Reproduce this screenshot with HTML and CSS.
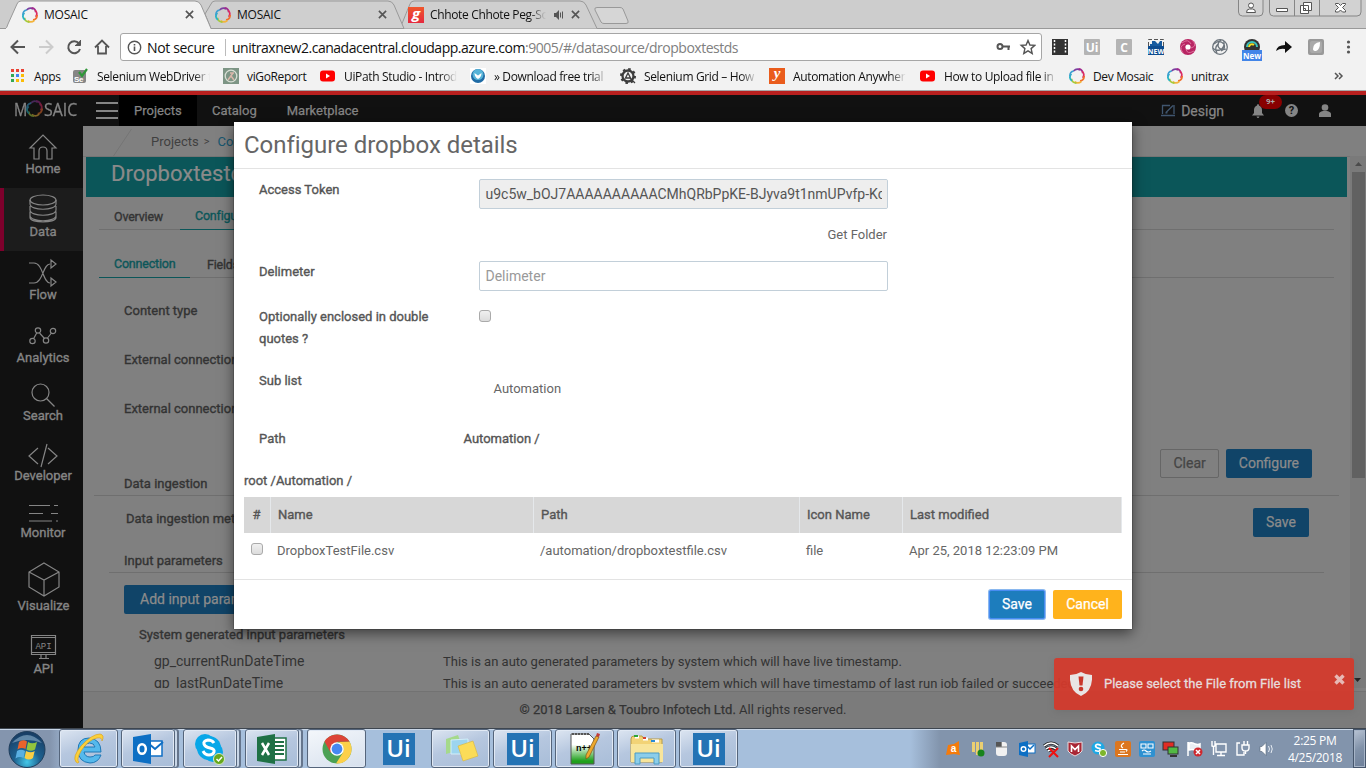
FILE: index.html
```html
<!DOCTYPE html>
<html lang="en">
<head>
<meta charset="utf-8">
<title>MOSAIC</title>
<link rel="stylesheet" href="styles.css">
</head>
<body>
<svg class="sprite" width="0" height="0">
  <symbol id="ring" viewBox="0 0 16 16"><g fill="none" stroke-width="1.7">
    <path stroke="#7a3fa0" d="M4.500 3Q8-.5 11 2.200"/><path stroke="#a0288d" d="M9.500.8Q13.800 1.500 13.600 5.200"/><path stroke="#dc2b62" d="M13.200 3.200Q16.300 6.800 13.600 9.800"/><path stroke="#f0702c" d="M15.200 8Q15 12.500 11 12.800"/><path stroke="#f3b43b" d="M12.500 13.300Q8.800 16.500 5.600 13.600"/><path stroke="#a6c93a" d="M7.500 15.200Q2.800 14.800 2.600 10.800"/><path stroke="#27b4c4" d="M2.800 12.800Q-.8 9.500 2.400 6"/><path stroke="#3c9fd1" d="M.9 8.200Q.8 3.600 4.800 3"/></g></symbol>
  <symbol id="yt" viewBox="0 0 16 16"><rect x="0" y="2.5" width="15" height="11" rx="3" fill="#f00"/><path d="M6 5.500v5l4-2.500z" fill="#fff"/></symbol>
  <symbol id="x" viewBox="0 0 10 10"><path d="M1 1l8 8M9 1l-8 8" stroke="#555" stroke-width="1.800" fill="none"/></symbol>
</svg>

<div class="browser">
  <div class="tabstrip">
    <svg class="tab-shapes" width="660" height="29"><path d="M0 28.500H1366" stroke="#999"/><path d="M398 28.500C401 28 402 23 410 4Q411 1 414 1H580Q584 1 586 5L597 28.500" fill="#cfcfcf" stroke="#999"/><path d="M205 14L211 4Q212 1 215 1H388Q392 1 394 5L404 28.500H211Z" fill="#cfcfcf" stroke="#999"/><path d="M-1 29H5Q7 28 8 24L17 4Q18 1 21 1H195Q199 1 201 5L211 28.500V30H-1Z" fill="#f2f2f2" stroke="#999"/><path d="M597 7.500H620Q622 7.500 623 9L628 21Q629 23.500 626 23.500H604Q602 23.500 601 22L595 10Q594 7.500 597 7.500Z" fill="#d6d6d6" stroke="#999"/></svg>
    <div class="tab"><svg class="i16"><use href="#ring"/></svg><span class="tab-name">MOSAIC</span><svg class="close"><use href="#x"/></svg></div>
    <div class="tab"><svg class="i16"><use href="#ring"/></svg><span class="tab-name">MOSAIC</span><svg class="close"><use href="#x"/></svg></div>
    <div class="tab"><span class="gaana">g</span><span class="tab-name fade">Chhote Chhote Peg-So</span><svg class="speaker" viewBox="0 0 10 10"><path d="M0 3h2l3-3v10L2 7H0z" fill="#555"/><path d="M6.500 2.500v5M8.500 1.500v7" stroke="#555"/></svg><svg class="close"><use href="#x"/></svg></div>
    <svg class="winctl" width="128" height="18"><g fill="#d2d2d2" stroke="#858585"><path d="M.5-2V12q0 4 4 4H21q4 0 4-4V-2M31.500-2V12q0 4 4 4H119q4 0 4-4V-2M56.500 0V16M81.500 0V16"/></g><g fill="#fff" stroke="#555"><circle cx="13" cy="5.500" r="2.500"/><path d="M8.500 12.500q0-3.500 3-3.500h3q3 0 3 3.500zM38.500 8.500h11v3h-11zM65.500 2.500h8v8h-8zM62.500 5.500h8v8h-8zM65.500 8.500h2v2h-2z"/><path d="M97.500 3.500h3l2 2 2-2h3v1l-3 3 3 3v1.500h-3l-2-2-2 2h-3v-1.500l3-3-3-3z"/></g></svg>
  </div>
  <div class="toolbar">
    <svg class="nav" width="112" height="34" viewBox="0 0 112 34"><g fill="none" stroke="#555" stroke-width="2"><path d="M25 18H12M18 11.500L11.500 18L18 24.500"/><path stroke="#ccc" d="M39 18h13M46 11.500l6.500 6.500-6.500 6.500"/><path d="M79 14.500A6 6 0 1 0 80 20"/><path d="M80.500 11v5.500H75" fill="#555" stroke-width="1"/><path d="M95 18.500l7-7 7 7M98 17v7.500h8V17" stroke-width="1.800"/></g></svg>
    <div class="omnibox">
      <svg width="15" height="15" viewBox="0 0 15 15"><circle cx="7.500" cy="7.500" r="6.200" fill="none" stroke="#555" stroke-width="1.400"/><path d="M7.500 6.500V11M7.500 4v1.500" stroke="#555" stroke-width="1.600"/></svg>
      <span class="secure">Not secure</span><span class="url">unitraxnew2.canadacentral.cloudapp.azure.com<i>:9005/#/datasource/dropboxtestds</i></span>
      <svg class="omni-icons" width="40" height="16" viewBox="0 0 40 16"><g fill="none" stroke="#555"><circle cx="4" cy="7.500" r="2.500" stroke-width="2"/><path d="M6.500 7.500h7.500M12.500 7v4" stroke-width="2"/><path d="M32 1.500l1.900 4.500 4.900.4-3.700 3.200 1.100 4.800-4.200-2.600-4.200 2.600 1.100-4.800-3.700-3.200 4.900-.4z" stroke-width="1.400"/></g></svg>
    </div>
    <svg class="ext" width="324" height="34" viewBox="0 0 324 34">
      <rect x="10" y="10" width="16" height="16" fill="#333"/><path d="M12.500 11v14M23.500 11v14" stroke="#fff" stroke-width="1.500" stroke-dasharray="2 1.500"/>
      <rect x="42" y="10" width="16" height="16" rx="1" fill="#b4b4b4"/><text x="50" y="22.500" class="et">Ui</text>
      <rect x="74" y="10" width="16" height="16" rx="1" fill="#b4b4b4"/><text x="82" y="22.500" class="et">C</text>
      <path d="M106.500 17v-6.500h15V17" fill="none" stroke="#555" stroke-dasharray="4 2"/><path d="M108 18v-3h2v-3h3l3 3 2-3h2v6z" fill="#155a9f"/><rect x="106" y="17" width="16" height="9" fill="#0d4b8f"/><text x="114" y="24.500" class="nw">NEW</text>
      <circle cx="146" cy="18" r="8" fill="#b82563"/><path d="M140 14q6-5 9 1M150 11q6 6-1 8M152 22q-7 4-8-2M141 24q-5-7 2-9" fill="none" stroke="#dd6f9b"/><circle cx="146" cy="18" r="2.600" fill="#fff"/>
      <g fill="none" stroke="#6b747c" stroke-width="1.300"><circle cx="178" cy="18" r="7.300"/><path d="M172 15q5-5 10 0 2 5-3 7M182 12q1 7-4 9-5 1-7-2M184 20q-6 2-8-3 0-4 3-6M175 24q-3-5 1-9"/></g>
      <circle cx="210" cy="18" r="8" fill="#333"/><path d="M205 18a5 5 0 0 1 10 0" fill="none" stroke="#3ac5bf" stroke-width="2"/><path d="M207 18a3 3 0 0 1 5-2" fill="none" stroke="#f4df22" stroke-width="2"/><rect x="200" y="21" width="20" height="11" fill="#4285e8"/><text x="210" y="29.500" class="nn">New</text>
      <path d="M234 22q1-6 9-6v-4l7 6-7 6v-4q-5-1-9 2z" fill="#111"/>
      <rect x="266" y="10" width="16" height="16" rx="2" fill="#999"/><rect x="268" y="12" width="12" height="12" rx="2" fill="#aaa"/><path d="M271 20q0-6 7-7 0 8-4 9-3 0-3-2z" fill="#fff"/>
      <g fill="#555"><circle cx="306.500" cy="13" r="1.600"/><circle cx="306.500" cy="18" r="1.600"/><circle cx="306.500" cy="23" r="1.600"/></g>
    </svg>
  </div>
  <div class="bookmarks">
    <div class="bm apps"><svg width="14" height="14" viewBox="0 0 14 14"><path fill="#ea4335" d="M0 0h3v3H0zM5 0h3v3H5zM10 0h3v3h-3z"/><path fill="#34a853" d="M0 5h3v3H0zM0 10h3v3H0z"/><path fill="#4285f4" d="M5 5h3v3H5z"/><path fill="#fbbc05" d="M10 5h3v3h-3zM5 10h3v3H5zM10 10h3v3h-3z"/></svg><span>Apps</span></div>
    <div class="bm"><svg class="i16" viewBox="0 0 16 16"><rect y="2" width="13" height="13" rx="2" fill="#858585"/><text x="1" y="14" class="se">Se</text><path d="M6 4l3 4 5-7" stroke="#2f9638" stroke-width="2.200" fill="none"/></svg><span class="fade">Selenium WebDriver t</span></div>
    <div class="bm"><svg class="i16" viewBox="0 0 16 16"><rect width="16" height="16" fill="#7d9585"/><circle cx="8" cy="8" r="5.800" fill="none" stroke="#d9dfd5" stroke-width="1.300"/><path d="M5 12l5-7M7 5h4M8 8l3 4" stroke="#d9b7aa" stroke-width="1.500"/></svg><span>viGoReport</span></div>
    <div class="bm"><svg class="i16"><use href="#yt"/></svg><span class="fade">UiPath Studio - Introd</span></div>
    <div class="bm"><svg class="i16" viewBox="0 0 16 16"><rect width="16" height="16" fill="#fff"/><circle cx="8" cy="8" r="7" fill="#1f6ba5"/><circle cx="8" cy="6.500" r="5.500" fill="#56b4d8"/><path d="M4.500 5l3.500 2.500L11.500 5q0 4-3.500 6Q4.500 9 4.500 5z" fill="#fff"/></svg><span class="fade">» Download free trial</span></div>
    <div class="bm"><svg class="i16" viewBox="0 0 16 16"><circle cx="8" cy="8" r="5.500" fill="none" stroke="#3d3d3d" stroke-width="2.300"/><circle cx="8" cy="8" r="7" fill="none" stroke="#3d3d3d" stroke-width="2" stroke-dasharray="2.500 3"/><path d="M5.500 10L8 5l2.500 5zM10 10l5 5" fill="none" stroke="#3d3d3d" stroke-width="1.300"/></svg><span class="fade">Selenium Grid – How t</span></div>
    <div class="bm"><span class="yicon">y</span><span class="fade">Automation Anywhere</span></div>
    <div class="bm"><svg class="i16"><use href="#yt"/></svg><span class="fade">How to Upload file in S</span></div>
    <div class="bm"><svg class="i16"><use href="#ring"/></svg><span>Dev Mosaic</span></div>
    <div class="bm"><svg class="i16"><use href="#ring"/></svg><span>unitrax</span></div>
    <svg class="more" width="10" height="8" viewBox="0 0 10 8"><path d="M1 1l3 3-3 3M5 1l3 3-3 3" fill="none" stroke="#555" stroke-width="1.500"/></svg>
  </div>
</div>

<div class="redline"></div>
<header class="apphead">
  <div class="brand"><span>M</span><svg width="17" height="17"><use href="#ring"/></svg><span>SAIC</span></div>
  <div class="burger"><i></i><i></i><i></i></div>
  <nav class="topnav"><a class="on">Projects</a><a>Catalog</a><a>Marketplace</a></nav>
  <div class="design"><svg width="15" height="13" viewBox="0 0 15 13"><path d="M1.500 10V1.500H9M13 1v9M0 11.500h14M5 8.500L12 1.500M4.500 9l2-.5" fill="none" stroke="#40566f" stroke-width="1.300"/></svg><span>Design</span></div>
  <div class="bell"><svg width="12" height="14" viewBox="0 0 12 14"><path d="M6 0q1 0 1 1.500Q10 2.500 10 6v3l2 2.500H0L2 9V6q0-3.500 3-4.500Q5 0 6 0zM4.500 12.500h3Q7 14 6 14t-1.500-1.500z" fill="#858585"/></svg><span class="badge">9+</span></div>
  <div class="help">?</div>
  <svg class="user" width="12" height="13" viewBox="0 0 12 13"><circle cx="6" cy="3.500" r="3.300" fill="#858585"/><path d="M0 13v-3q0-2 4-3h4q4 1 4 3v3z" fill="#858585"/></svg>
</header>

<div class="appbody">
  <aside class="side">
    <a class="s-home"><svg width="30" height="28" viewBox="0 0 30 28"><path d="M2 15L15 2l13 13h-4v11h-5v-8q0-4-4-4t-4 4v8H6V15z"/></svg><span>Home</span></a>
    <a class="s-data"><svg width="28" height="29" viewBox="0 0 28 29"><ellipse cx="14" cy="6" rx="13" ry="5"/><path d="M1 6v4c0 7 26 7 26 0V6M1 12v4c0 7 26 7 26 0v-4M1 17.500v4c0 7 26 7 26 0v-4M1 21.500v2c0 6 26 6 26 0v-2"/></svg><span>Data</span></a>
    <a><svg width="28" height="28" viewBox="0 0 28 28"><path d="M0 4h5C14 4 14 24 21 24M0 24h5C14 24 14 5 21 5M22 1v8l5-4zM22 19v8l5-4z"/></svg><span>Flow</span></a>
    <a class="s-an"><svg width="28" height="18" viewBox="0 0 28 18"><circle cx="3.500" cy="14" r="2.700"/><circle cx="9" cy="3.500" r="2.700"/><circle cx="17" cy="13.500" r="2.700"/><circle cx="24" cy="4" r="2.700"/><path d="M4.700 11.500l3-5.500M10.500 6l5 5.500M18.500 11l4-5"/></svg><span>Analytics</span></a>
    <a class="s-se"><svg width="24" height="24" viewBox="0 0 24 24"><circle cx="9.500" cy="9.500" r="8.500"/><path d="M15.500 15.500l8 8"/></svg><span>Search</span></a>
    <a class="s-dev"><svg width="30" height="25" viewBox="0 0 30 25"><path d="M10 5L1 13l9 8M20 5l9 8-9 8M19 1l-6 23"/></svg><span>Developer</span></a>
    <a class="s-mon"><svg width="30" height="19" viewBox="0 0 30 19"><path d="M1 1.500h21M26 1.500h4M1 9.500h14M23 9.500h7M1 17h23M28 17h2"/></svg><span>Monitor</span></a>
    <a class="s-vis"><svg width="32" height="35" viewBox="0 0 32 35"><path d="M16 1l15 9v15l-15 9L1 25V10zM1 10l15 8 15-8M16 18v16"/></svg><span>Visualize</span></a>
    <a class="s-api"><svg width="26" height="24" viewBox="0 0 26 24"><path d="M.5.500h24v19H.5zM1 2.500h23M1 17.500h23M10 20v3M15 20v3M8 23.500h10"/><text x="12.500" y="14">API</text></svg><span>API</span></a>
  </aside>

  <div class="main">
    <div class="crumbs"><svg width="40" height="30"><path d="M31.500 3L13.500 30" stroke="#757575" fill="none"/></svg><span>Projects</span><b>&gt;</b><em>Configuration</em></div>
    <div class="scrollarea">
      <div class="pane">
        <h1 class="band">Dropboxtestds</h1>
        <div class="tabs t1"><a class="ov">Overview</a><a class="sel">Configuration</a></div>
        <div class="tabs t2"><a class="sel">Connection</a><a class="fl">Fields</a></div>
        <div class="field">Content type</div>
        <div class="field">External connection type</div>
        <div class="field">External connection</div>
        <div class="btnrow"><button class="btn ghost">Clear</button><button class="btn blue">Configure</button></div>
        <div class="ingest">Data ingestion</div>
        <div class="method"><span>Data ingestion method</span><button class="btn blue save">Save</button></div>
        <div class="inputs">Input parameters</div>
        <button class="btn blue add">Add input parameter</button>
        <div class="sys">System generated input parameters</div>
        <div class="prow"><span>gp_currentRunDateTime</span><span>This is an auto generated parameters by system which will have live timestamp.</span></div>
        <div class="prow"><span>gp_lastRunDateTime</span><span>This is an auto generated parameters by system which will have timestamp of last run job failed or succeeded.</span></div>
      </div>
      <div class="scroll"><svg width="16" height="16"><path d="M5 10h7L8.500 6z" fill="#4b4b4b"/></svg><i></i><svg class="down" width="16" height="16"><path d="M2 6h7L5.500 10z" fill="#222"/></svg></div>
    </div>
    <footer class="foot"><b>© 2018 Larsen &amp; Toubro Infotech Ltd.</b> All rights reserved.</footer>
  </div>
</div>

<section class="modal">
  <h2>Configure dropbox details</h2>
  <div class="mbody">
    <div class="mrow r1"><label>Access Token</label><div class="inp dis">u9c5w_bOJ7AAAAAAAAAACMhQRbPpKE-BJyva9t1nmUPvfp-Kc</div></div>
    <div class="getf">Get Folder</div>
    <div class="mrow r2"><label>Delimeter</label><div class="inp ph">Delimeter</div></div>
    <div class="mrow r3"><label>Optionally enclosed in double quotes ?</label><i class="cb"></i></div>
    <div class="mrow r4"><label>Sub list</label><span>Automation</span></div>
    <div class="mrow r5"><label>Path</label><b>Automation /</b></div>
    <div class="root">root /Automation /</div>
    <div class="grid gh"><span>#</span><span>Name</span><span>Path</span><span>Icon Name</span><span>Last modified</span></div>
    <div class="grid gr"><span><i class="cb"></i></span><span>DropboxTestFile.csv</span><span>/automation/dropboxtestfile.csv</span><span>file</span><span>Apr 25, 2018 12:23:09 PM</span></div>
  </div>
  <div class="mfoot"><button class="btn msave">Save</button><button class="btn mcancel">Cancel</button></div>
</section>

<div class="toast"><svg width="22" height="24" viewBox="0 0 22 24"><path d="M11 0q5 3 11 3 1 16-11 21Q-1 19 0 3q6 0 11-3z" fill="#e9e5e5"/><path d="M8.500 4.500h5l-1 9h-3z" fill="#c9362b"/><circle cx="11" cy="17" r="2.300" fill="#c9362b"/></svg><span>Please select the File from File list</span><svg class="tx" width="11" height="11" viewBox="0 0 11 11"><path d="M1.500 1.500l8 8M9.500 1.500l-8 8" stroke="#e7b9b5" stroke-width="3.400"/></svg></div>

<div class="taskbar">
  <svg class="orb" width="60" height="40" viewBox="0 0 60 40"><defs><radialGradient id="og" cx=".5" cy=".85" r=".8"><stop offset="0" stop-color="#43c7e8"/><stop offset=".45" stop-color="#1d618f"/><stop offset="1" stop-color="#183e66"/></radialGradient></defs><circle cx="27" cy="20.500" r="18" fill="url(#og)" stroke="#203e5c"/><path d="M12 14Q27-2 42 14 27 8 12 14" fill="#8fb2cd" opacity=".6"/><path d="M19 13q4-3 8-.5L25.500 20q-4-2-8 .5z" fill="#e8632c"/><path d="M28 13q4 2.500 9 0L35 20.500q-4 2.500-8.500 0z" fill="#92c43e"/><path d="M17 22q4-2.500 8 0L23.500 29q-4-2-8 .5z" fill="#5ab0e2"/><path d="M26 22q5 2.500 8.700 0L33 29q-4 3-8.500 0z" fill="#f9ce44"/></svg>
  <div class="tb"><svg width="34" height="34" viewBox="0 0 34 34"><path d="M29 20H12q1 5 6 5 4 0 5-2h6q-3 8-11 8-12-1-12-13Q6 6 17 6q12 1 12 14zM12 15h11q-1-4-5.500-4T12 15z" fill="#55b9ec" stroke="#1e78b6" fill-rule="evenodd"/><path d="M4 30Q0 25 9 14 20 2 28 2q5 1 2 7 0-4-5-3Q16 8 9 19 4 28 7 30q-1 2-3 0z" fill="#fbd03b" stroke="#d99c13" stroke-width=".6"/></svg></div>
  <div class="tb stack"><svg width="32" height="32" viewBox="0 0 32 32"><rect x="14" y="8" width="16" height="15" fill="#fff" stroke="#0f6fc5" stroke-width="1.500"/><path d="M16 10l7 6 8-7" fill="none" stroke="#0f6fc5" stroke-width="2"/><path d="M1 4l18-3v30L1 28z" fill="#0d6fc4"/><ellipse cx="10" cy="16" rx="3.800" ry="4.800" fill="none" stroke="#fff" stroke-width="2.500"/></svg></div>
  <div class="tb stack s2"><svg width="32" height="32" viewBox="0 0 32 32"><circle cx="11" cy="11" r="10" fill="#08a7e8"/><circle cx="19" cy="19" r="10" fill="#08a7e8"/><circle cx="15" cy="15" r="12" fill="#08a7e8"/><path d="M20 10q-2-3-6-3-5 1-4 4 1 3 6 4 5 1 4 4-1 3-5 3t-6-4" fill="none" stroke="#fff" stroke-width="3"/><circle cx="25" cy="26" r="5.500" fill="#66a81c" stroke="#d9e8c8"/><path d="M22.500 26l2 2 3.500-4" fill="none" stroke="#fff" stroke-width="1.500"/></svg></div>
  <div class="tb stack"><svg width="32" height="32" viewBox="0 0 32 32"><rect x="16" y="5" width="14" height="22" fill="#fff" stroke="#1f7145" stroke-width="1.500"/><path d="M19 9h9M19 13h9M19 17h9M19 21h9" stroke="#1f7145" stroke-width="2"/><path d="M1 4l18-3v30L1 28z" fill="#1f7145"/><path d="M6 10l7 12M13 10L6 22" stroke="#fff" stroke-width="2.500"/></svg></div>
  <div class="tb lit"><svg width="30" height="30" viewBox="0 0 30 30"><circle cx="15" cy="15" r="14.500" fill="#4ba154"/><path d="M2.500 7.600A14.500 14.500 0 0 1 27.600 7.800H15l-6.300 11z" fill="#dc4437"/><path d="M27.600 7.800A14.500 14.500 0 0 1 14 29.500l7-11Q22.500 12 17 8z" fill="#fdd04a"/><circle cx="15" cy="15" r="6.800" fill="#fff"/><circle cx="15" cy="15" r="5.400" fill="#4688f1"/></svg></div>
  <div class="tb bare"><span class="ui">Ui</span></div>
  <div class="tb"><svg width="36" height="34" viewBox="0 0 36 34"><path d="M3 7l12-4 5 14-17 5z" fill="#a5d98b"/><path d="M8 8l17-1v15H8z" fill="#9cd5ef" stroke="#d4eef8"/><path d="M15 14l15-5 5 15-15 5z" fill="#fbdc58" stroke="#d7b63c" stroke-width=".6"/></svg></div>
  <div class="tb"><span class="ui">Ui</span></div>
  <div class="tb"><svg width="32" height="34" viewBox="0 0 32 34"><defs><linearGradient id="ng" x2="0" y2="1"><stop offset=".35" stop-color="#fff"/><stop offset=".9" stop-color="#1fa01c"/></linearGradient></defs><path d="M2 2h18l5 5v25H2z" fill="url(#ng)" stroke="#555"/><path d="M3 2h17" stroke="#555" stroke-dasharray="2 1" stroke-width="2"/><text x="7" y="19" class="np">n++</text><path d="M27 4l3 1-10 20-3 2 0-4z" fill="#eda92e" stroke="#805416" stroke-width=".7"/><path d="M27 4l1-3 3 1-1 3z" fill="#c43c3c"/></svg></div>
  <div class="tb"><svg width="34" height="34" viewBox="0 0 34 34"><path d="M1 7q0-3 3-3h8l2 3h18v23H1z" fill="#f2d376" stroke="#b99b45"/><path d="M5 5h4M13 7h5M22 9h7" stroke="#fff" stroke-width="3"/><path d="M4 4h4" stroke="#2ba63a" stroke-width="2"/><path d="M13 6h3" stroke="#d44431" stroke-width="2"/><path d="M21 9h4" stroke="#288bd5" stroke-width="2"/><path d="M1 12h32v18H1z" fill="#f8e59b"/><path d="M5 32V21h24v11h-5v-6H10v6z" fill="#8bcdea" stroke="#4a9bc5"/></svg></div>
  <div class="tb"><span class="ui">Ui</span></div>
  <div class="tray">
    <svg width="336" height="24" viewBox="0 0 336 24">
      <g transform="translate(4 4)"><path d="M2 4l6-1 5-3v10l1 4-6-1-8 1z" fill="#f57b0b"/><text x="7.500" y="11" class="ta">a</text></g>
      <g transform="translate(29 4)"><path d="M1 1h3v10l4 4 4-4V1H9v11H8V1H5v11H4z" fill="#d1b355"/><path d="M1 1h3v10H1zM5 1h3v13H5zM9 1h3v10H9z" fill="#ebcf72"/><circle cx="10" cy="12" r="3.500" fill="#18841c"/></g>
      <g transform="translate(53 4)"><rect x="1" y="1" width="11" height="14" rx="3" fill="#f1f1f1"/><path d="M1 1h6v5H1z" fill="#555"/><path d="M1 6h11M6.500 1v5" stroke="#888"/></g>
      <g transform="translate(77 4)"><rect x="7" y="3" width="9" height="9" fill="#fff" stroke="#0d6fc4"/><path d="M8 5l3 3 4-4" stroke="#0d6fc4" fill="none" stroke-width="1.500"/><path d="M0 2l9-2v16L0 14z" fill="#0d6fc4"/><circle cx="4.500" cy="8" r="2.300" fill="none" stroke="#fff" stroke-width="1.400"/></g>
      <g transform="translate(101 4)" fill="none"><path d="M1 5q7-6 14 0M3 8q5-4 10 0M5 10q3-2 5 0" stroke="#222" stroke-width="3"/><path d="M1 5q7-6 14 0M3 8q5-4 10 0M5 10q3-2 5 0" stroke="#fff" stroke-width="1.600"/><path d="M6 7l9 9M15 7l-9 9" stroke="#e11" stroke-width="2"/></g>
      <g transform="translate(125 4)"><path d="M1 1l7 1 7-1v9q-2 3-7 5-5-2-7-5z" fill="#a92735" stroke="#e8d9dc"/><path d="M4.500 11V5L8 8.500 11.500 5v6" fill="none" stroke="#fff" stroke-width="1.600"/></g>
      <g transform="translate(149 4)"><circle cx="7" cy="7" r="6.500" fill="#1da9e5"/><path d="M10 4.500Q5 2 4.500 5 5 7 9 7.500q1 4-5 2" fill="none" stroke="#fff" stroke-width="1.600"/><circle cx="12" cy="12" r="3.600" fill="#7db52b" stroke="#fff"/></g>
      <g transform="translate(173 4)"><rect width="16" height="16" rx="2" fill="#dc761f"/><path d="M9 2q-5 3-1 5M4 8.500h7q2 0 0 2M5 11h5M3 13.500h10" stroke="#fff" fill="none" stroke-width="1.200"/></g>
      <g transform="translate(197 4)"><rect width="16" height="16" rx="2" fill="#2e91d1"/><path d="M2 3h5v4H2zM9 3h5v4H9zM3 10q2-2 4 0t5 0M4 13h8" stroke="#fff" fill="none" stroke-width="1.100"/></g>
      <g transform="translate(221 4)"><rect x="0" y="1" width="11" height="8" fill="#e22c24" stroke="#333"/><rect x="5" y="6" width="10" height="7" fill="#52b944" stroke="#333"/><path d="M7 15h7" stroke="#333" stroke-width="2"/></g>
      <g transform="translate(245 4)"><path d="M1 1v14M2 2q4-1 6 1 3 1 5 0v7q-3 1-5-1-3-1-6 0z" stroke="#fff" stroke-width="1.500" fill="#e9eef3"/><circle cx="11" cy="11" r="4.500" fill="#cf282e"/><path d="M9 9l4 4M13 9l-4 4" stroke="#fff" stroke-width="1.500"/></g>
      <g transform="translate(269 4)" fill="none" stroke="#fff" stroke-width="1.400"><path d="M5 3h10v8H5zM10 11v3M6 14.500h8M1 0v5q3 1 3-1V0M2.500 6v8"/></g>
      <g transform="translate(293 4)" fill="none" stroke="#fff" stroke-width="1.400"><path d="M5 2H2v12h7v-3"/><path d="M7 4h7v3q0 3-3.500 3T7 7zM9 0v4M12.500 0v4M10.500 10v3" /></g>
      <g transform="translate(317 4)"><path d="M1 5.500h2l4-4v13l-4-4H1z" fill="#fff" stroke="#566579" stroke-width=".6"/><path d="M9.500 5q2 3 0 6M12 4q2.500 4 0 8" fill="none" stroke="#e7edf3"/></g>
    </svg>
    <div class="clock">2:25 PM<br>4/25/2018</div>
    <div class="peek"></div>
  </div>
</div>
</body>
</html>
```
FILE: styles.css
```css
* { box-sizing: border-box; }
body { margin: 0; width: 1366px; height: 768px; overflow: hidden; position: relative; background: #808080; font-family: Roboto, "Liberation Sans", sans-serif; }
svg { display: block; flex: none; }
.sprite { position: absolute; }
.i16 { width: 16px; height: 16px; }

/* browser window */
.browser { height: 91px; background: #f2f2f2; border-bottom: 1px solid #a9a9a9; font: 12px "Open Sans", "Noto Sans", sans-serif; color: #111; }
.tabstrip { position: relative; height: 29px; display: flex; background: #cdcdcd; border-bottom: 1px solid #999; padding-left: 22px; }
.tab-shapes { position: absolute; left: 0; top: 0; }
.tab { position: relative; width: 193px; display: flex; align-items: center; height: 29px; }
.tab-name { margin-left: 6px; width: 140px; white-space: nowrap; overflow: hidden; letter-spacing: -.25px; line-height: 18px; }
.tab .close { width: 9px; height: 9px; margin-left: auto; margin-right: 21px; }
.tab .tab-name.fade { width: 116px; letter-spacing: -.35px; }
.fade { -webkit-mask-image: linear-gradient(90deg, #000 86%, transparent); mask-image: linear-gradient(90deg, #000 86%, transparent); }
.speaker { width: 10px; height: 10px; margin-left: 8px; }
.gaana { width: 16px; height: 16px; background: linear-gradient(#f0572c, #e5293e); color: #fff; font: italic bold 15px/12px "Open Sans", sans-serif; text-align: center; }
.winctl { position: absolute; right: 0; top: 0; }
.toolbar { height: 34px; display: flex; }
.nav { margin-right: 8px; }
.omnibox { width: 922px; height: 28px; margin-top: 4px; display: flex; align-items: center; background: #fff; border: 1px solid #a6a6a6; border-radius: 3px; padding-left: 6px; font-size: 14px; }
.secure { margin-left: 5px; width: 79px; border-right: 1px solid #bbb; line-height: 17px; letter-spacing: -.35px; white-space: nowrap; }
.url { margin-left: 6px; letter-spacing: -.484px; white-space: nowrap; }
.url i { font-style: normal; color: #808080; }
.omni-icons { margin-left: auto; margin-right: 5px; }
.et, .nw, .nn { fill: #fff; text-anchor: middle; font: bold 12px "Open Sans", sans-serif; }
.nw { font-size: 7px; } .nn { font-size: 8px; }
.bookmarks { height: 26px; padding-left: 11px; display: grid; grid-template-columns: 62px 150px 97px 150px 150px 149px 151px 149px 98px 167px 20px; align-items: center; }
.bm { display: flex; align-items: center; gap: 8px; white-space: nowrap; letter-spacing: -.35px; }
.bm.apps { gap: 9px; }
.bm .fade { width: 113px; overflow: hidden; }
.se { font: bold 8px sans-serif; fill: #fff; }
.yicon { width: 16px; height: 16px; background: #ea5c1c; color: #fff; font: italic bold 15px/11px "Liberation Serif", serif; text-align: center; }

/* application header */
.redline { height: 4px; background: #b8201f; }
.apphead { height: 31px; display: flex; align-items: flex-start; background: #111; color: #858585; padding-left: 14px; }
.brand { width: 82px; height: 27px; display: flex; align-items: center; font: 18px "Open Sans", sans-serif; -webkit-text-stroke: .3px; }
.brand span { transform: scaleX(.82); transform-origin: left; }
.brand span:last-child { margin-left: 1px; transform: scaleX(.88); }
.brand svg { opacity: .5; margin-left: -4px; }
.burger { width: 23px; height: 31px; padding-top: 7px; display: flex; flex-direction: column; gap: 5.500px; }
.burger i { height: 2px; width: 22px; background: #858585; }
.topnav { display: flex; font-size: 13px; line-height: 31px; }
.topnav a { padding: 0 15px; -webkit-text-stroke: .25px; }
.topnav a.on { background: #000; width: 78px; }
.design { margin-left: auto; display: flex; gap: 5px; align-items: center; height: 31px; font-size: 14px; -webkit-text-stroke: .25px; }
.bell { margin-left: 28px; display: flex; padding-top: 9px; position: relative; width: 33px; }
.badge { position: absolute; left: 7px; top: 0; width: 23px; height: 14px; border-radius: 7px; background: #800; color: #a9a9a9; font: bold 8px/14px Roboto, sans-serif; text-align: center; }
.help { width: 13px; height: 13px; border-radius: 50%; background: #858585; color: #111; font: bold 11px/13px Roboto, sans-serif; text-align: center; margin-top: 9px; }
.user { margin: 9px 35px 0 21px; }

/* sidebar */
.appbody { height: 602px; display: flex; }
.side { width: 83px; background: #111; color: #858585; font-size: 13px; }
.side a { height: 63px; display: flex; flex-direction: column; align-items: center; justify-content: flex-end; padding: 0 0 11px 3px; -webkit-text-stroke: .35px; }
.side span { line-height: 16px; }
.side svg { fill: none; stroke: #858585; stroke-width: 1.200; -webkit-text-stroke: 0; overflow: visible; }
.side .s-home { height: 62px; } .side .s-data { background: #1c1c1c; border-left: 4px solid #7e002c; padding-left: 0; padding-right: 1px; }
.side .s-data svg { margin-bottom: 1px; }
.side .s-an svg { margin-bottom: 5px; } .side .s-se { height: 58px; } .side .s-se svg { margin-bottom: 1px; }
.side .s-dev { height: 60px; } .side .s-mon { height: 57px; } .side .s-mon svg { margin-bottom: 2px; }
.side .s-vis { height: 73px; padding-left: 4px; } .side .s-vis svg { margin-bottom: 1px; } .side .s-api { padding-left: 4px; } .side .s-api svg { margin-bottom: 2px; }
.side text { font: 9px "Liberation Mono", monospace; fill: #858585; stroke: none; text-anchor: middle; }

/* content */
.main { width: 1283px; color: #333; font-size: 13px; background: #808080; }
.crumbs { height: 30px; display: flex; align-items: center; gap: 5px; color: #404040; }
.crumbs svg { margin-left: 17px; margin-right: 6px; }
.crumbs b { font-weight: 400; font-size: 11px; margin-right: 3px; } .crumbs em { font-style: normal; color: #16566f; }
.scrollarea { height: 532px; display: flex; border-top: 1px solid #747474; }
.pane { width: 1267px; overflow: hidden; padding-left: 3px; }
.band { margin: 0; width: 1261px; height: 40px; background: #0b5659; color: #8a8a8a; font: 400 22px/34px Roboto, sans-serif; padding-left: 25px; -webkit-text-stroke: .2px; }
.tabs { margin-left: 13px; width: 1235px; display: flex; align-items: flex-end; border-bottom: 1px solid #6f6f6f; -webkit-text-stroke: .35px; }
.tabs a { padding: 0 15px; line-height: 27px; margin-bottom: -1px; font-size: 12.500px; letter-spacing: -.2px; }
.t1 { height: 33px; } .t2 { height: 48px; }
.tabs .ov { width: 81px; } .tabs .sel { color: #0b5659; border-bottom: 1px solid #0b5659; }
.t2 .sel { width: 91px; } .t2 .fl { padding-left: 17px; }
.field, .ingest, .inputs, .method, .sys { -webkit-text-stroke: .35px; }
.field { height: 49px; padding-left: 38px; line-height: 16px; } .t2 + .field { margin-top: 25px; }
.btnrow { display: flex; justify-content: flex-end; gap: 7px; padding-right: 38px; margin-top: -1px; height: 26px; }
.btn { font: 14px/27px Roboto, sans-serif; height: 29px; padding: 0 12px; border: 1px solid transparent; border-radius: 2px; flex: none; -webkit-text-stroke: .25px; white-space: nowrap; display: block; }
.btn.blue { background: #104468; color: #8b8b8b; } .btn.ghost { background: transparent; border-color: #666; color: #454545; }
.ingest { margin-left: 8px; width: 1245px; border-bottom: 1px solid #6f6f6f; padding-left: 30px; line-height: 18px; height: 21px; }
.method { display: flex; justify-content: space-between; padding: 12px 41px 0 40px; height: 57px; line-height: 21px; }
.inputs { margin-left: 23px; width: 1215px; border-bottom: 1px solid #6f6f6f; padding-left: 15px; height: 20px; line-height: 16px; }
.add { margin: 12px 0 0 38px; padding: 0 15px; }
.sys { padding-left: 53px; line-height: 18px; margin-top: 12px; height: 24px; }
.prow { padding-left: 68px; display: grid; grid-template-columns: 289px 1fr; height: 22px; line-height: 23px; white-space: nowrap; }
.prow span:first-child { font-size: 14px; }
.scroll { width: 16px; background: #7a7a7a; margin-top: -1px; padding-left: 2px; display: flex; flex-direction: column; }
.scroll > svg { margin-left: -2px; }
.scroll i { width: 13px; height: 306px; background: #616161; } .scroll .down { margin-top: auto; margin-left: 0; }
.foot { margin-top: 3px; width: 1283px; height: 37px; border-top: 1px solid #727272; background: #7b7b7b; text-align: center; line-height: 35px; padding-right: 83px; }
.foot b { font-weight: 400; -webkit-text-stroke: .25px; }

/* dialog */
.modal { position: absolute; left: 234px; top: 122px; width: 898px; height: 507px; background: #fff; box-shadow: 0 4px 13px rgba(0,0,0,.55), 0 0 1px #111; color: #666; font-size: 13px; display: flex; flex-direction: column; }
.modal h2 { margin: 0; height: 47px; border-bottom: 1px solid #e3e3e3; padding-left: 10px; font: 400 24px/46px Roboto, sans-serif; letter-spacing: -.04px; }
.mbody { padding: 0 10px; height: 410px; }
.mrow { display: flex; align-items: flex-start; padding-left: 15px; }
label, .mrow b, .root, .gh { font-weight: 400; color: #555; -webkit-text-stroke: .35px; }
label { width: 220px; padding-right: 30px; line-height: 22px; flex: none; }
.inp { width: 409px; height: 30px; border: 1px solid #c2cfd9; border-radius: 2px; padding: 0 6px 0 5.500px; font-size: 14px; line-height: 29px; white-space: nowrap; overflow: hidden; }
.inp.dis { background: #eee; color: #555; position: relative; } .inp.dis::after { content: ""; position: absolute; right: 0; top: 0; width: 5px; height: 28px; background: #eee; }
.inp.ph { color: #999; }
.r1 { padding-top: 10px; height: 55px; }
.getf { width: 643px; text-align: right; line-height: 22px; height: 37px; }
.r2 { height: 45px; } .r3 { height: 64px; }
.r4 { height: 58px; } .r4 span { padding: 8px 0 0 14.500px; line-height: 22px; }
.r5 { height: 42px; line-height: 22px; } .r5 label { width: 204.500px; }
.root { line-height: 22px; height: 27px; }
.cb { width: 12px; height: 12px; border: 1px solid #aaa; border-radius: 3px; background: linear-gradient(#f0f0f0, #dcdcdc); display: block; }
.grid { display: grid; grid-template-columns: 27px 263px 266px 103px 219px; height: 36px; line-height: 35px; }
.gh { background: #d7d7d7; } .gh span { padding-left: 7px; border-right: 1px solid #e5e8eb; } .gh span:first-child { padding-left: 8.500px; }
.gr span { padding-left: 6px; } .gr .cb { margin: 10px 0 0 1px; }
.mrow .cb { margin-top: 4px; }
.mfoot { flex: 1; border-top: 1px solid #e3e3e3; display: flex; justify-content: flex-end; gap: 8px; padding: 10px 10px 0 0; }
.mfoot .btn { line-height: 26px; padding: 0 0 1px; }
.msave { width: 56px; color: #fff; background: #1d7dbd; border-color: #488cf2; box-shadow: 0 0 0 1px #8ab8ef; }
.mcancel { width: 69px; color: #fff; background: #ffb31c; }

.toast { position: absolute; left: 1054px; top: 658px; width: 300px; height: 52px; border-radius: 3px; background: rgba(211,57,44,.94); color: #e7dddd; display: flex; align-items: center; padding-left: 16px; font-size: 13px; -webkit-text-stroke: .3px; box-shadow: 0 2px 6px rgba(100,100,100,.35); }
.toast span { margin: -2px 0 0 12px; } .tx { margin: -10px 9px 0 auto; }

/* taskbar */
.taskbar { height: 40px; display: flex; background: linear-gradient(90deg, #8495ae 50px, #a6bfdc 72px, #a6bfdc 910px, #8294ac 940px); border-top: 1px solid #3e4650; box-shadow: inset 0 1px #c9d7e8; }
.orb { margin-right: -1px; }
.tb { width: 59px; height: 39px; margin-right: 3px; display: flex; justify-content: center; align-items: center; border: 1px solid #55657b; border-radius: 3px; background: linear-gradient(160deg, #dce5f1, #b6c7df 45%, #a8bdd8); box-shadow: inset 0 0 0 1px #e1e9f4; }
.tb.stack { width: 54px; margin-right: 8px; box-shadow: inset 0 0 0 1px #e1e9f4, 3px 0 0 -1px #c9d7e8, 4px 0 0 0 #65758c; }
.tb.lit { background: linear-gradient(160deg, #f4f7fb, #d6e0ed); }
.tb.bare { border: 0; background: none; box-shadow: none; }
.ui { width: 32px; height: 32px; background: #2473b4; color: #fff; font: 600 24px/30px "Open Sans", sans-serif; text-align: center; }
.np { font: bold 9px sans-serif; }
.tray { margin-left: auto; width: 430px; display: flex; align-items: center; }
.tray > svg { margin-left: 6px; }
.ta { font: bold 10px sans-serif; fill: #fff; text-anchor: middle; }
.clock { width: 74px; color: #fff; font: 12px/17px "Open Sans", sans-serif; text-align: center; letter-spacing: -.3px; }
.peek { margin-left: auto; width: 13px; height: 39px; border: 1px solid #46566c; background: linear-gradient(150deg, #b9c4d4, #8192a9 50%, #6d7f99); box-shadow: inset 0 0 0 1px #a6b4c7; }
```
